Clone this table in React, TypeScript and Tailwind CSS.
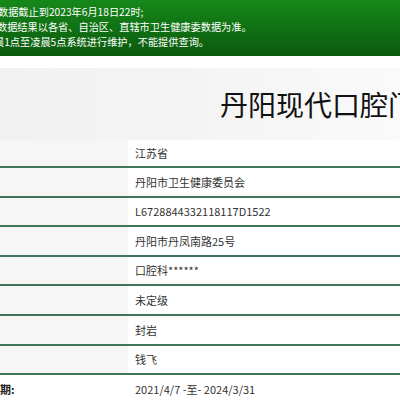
const rows = [
  { label: "所在省份：", value: "江苏省" },
  { label: "登记机关：", value: "丹阳市卫生健康委员会" },
  { label: "登记号：", value: "L6728844332118117D1522" },
  { label: "地址：", value: "丹阳市丹凤南路25号" },
  { label: "诊疗科目：", value: "口腔科******" },
  { label: "级别：", value: "未定级" },
  { label: "法人：", value: "封岩" },
  { label: "负责人：", value: "钱飞" },
];

export default function App() {
  return (
    <div
      className="w-[400px] h-[400px] overflow-hidden bg-white text-[#333]"
      style={{ fontFamily: '"Noto Sans CJK SC", "Microsoft YaHei", sans-serif' }}
    >
      {/* notice bar */}
      <div className="h-[56px] bg-gradient-to-b from-[#16881a] to-[#0b5a0e] pt-[4px] text-[10.2px] leading-[15px] text-white overflow-hidden">
        <div className="ml-[-2px] whitespace-nowrap">数据截止到2023年6月18日22时;</div>
        <div className="ml-[-3px] whitespace-nowrap">数据结果以各省、自治区、直辖市卫生健康委数据为准。</div>
        <div className="ml-[-6px] whitespace-nowrap">晨1点至凌晨5点系统进行维护，不能提供查询。</div>
      </div>

      {/* title */}
      <div className="mt-[12px] h-[72px] bg-gradient-to-r from-[#f1f1f1] via-[#f4f4f4] to-[#fafafa] flex items-center overflow-hidden">
        <div className="ml-[220px] whitespace-nowrap text-[28px] leading-none text-[#111]">
          丹阳现代口腔门诊部
        </div>
      </div>

      {/* info table */}
      <div className="flex flex-col">
        {rows.map((r, i) => (
          <div
            key={r.value}
            className={`flex ${i === 0 ? "h-[28px]" : "h-[29.6px]"} border-b-2 border-[#42765b] box-border`}
          >
            <div className="w-[128px] shrink-0 bg-[#f6f6f6]"></div>
            <div className="flex-1 bg-white flex items-center pl-[7px] text-[11px] text-[#333] whitespace-nowrap">
              {r.value}
            </div>
          </div>
        ))}
        <div className="flex h-[29px]">
          <div className="w-[128px] shrink-0 bg-white flex items-center text-[11px] font-bold text-[#222] whitespace-nowrap overflow-hidden">
            <span className="ml-[-11px]">效期:</span>
          </div>
          <div className="flex-1 bg-white flex items-center pl-[7px] text-[11px] text-[#333] whitespace-nowrap">
            2021/4/7 -至- 2024/3/31
          </div>
        </div>
      </div>
    </div>
  );
}
